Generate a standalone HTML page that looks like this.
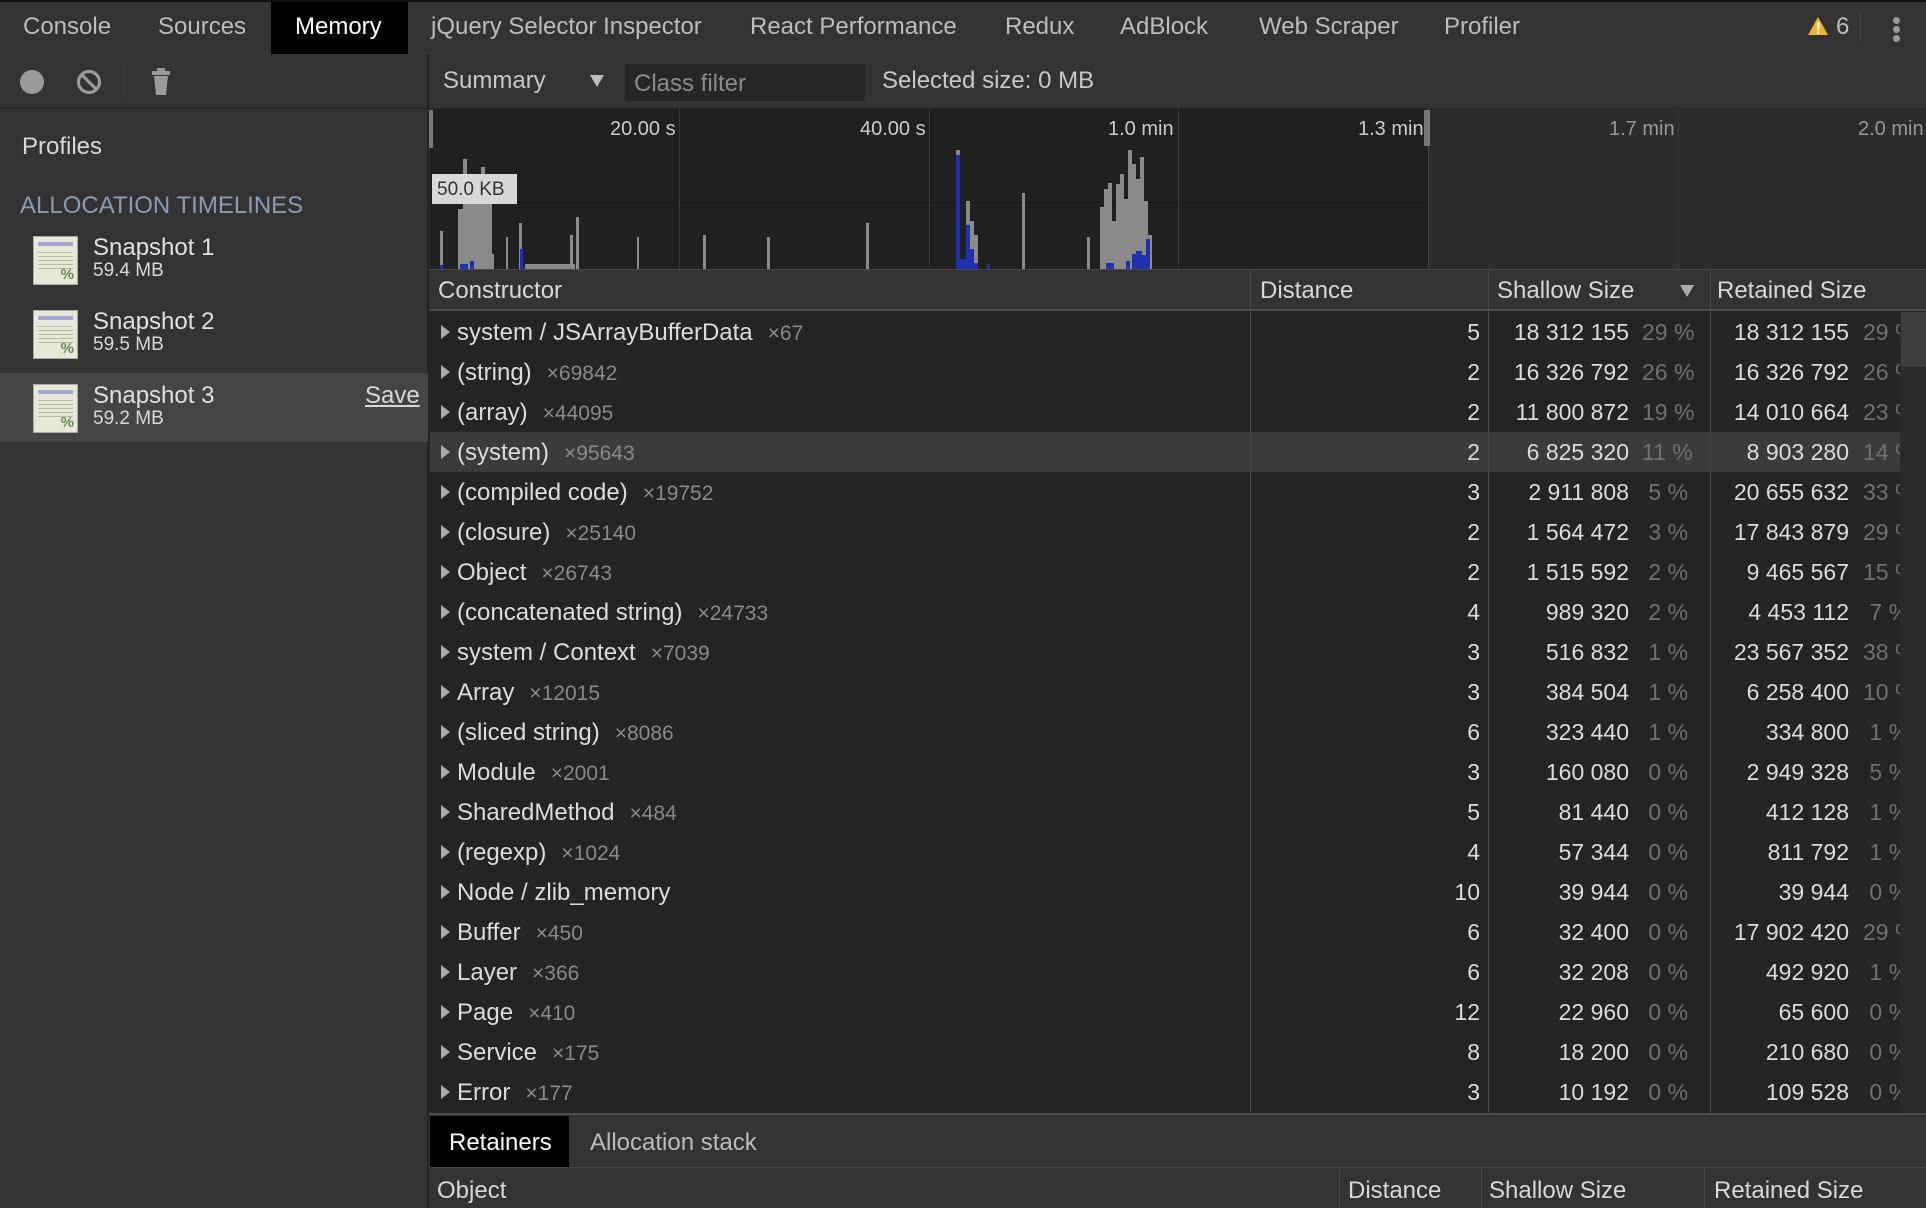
<!DOCTYPE html>
<html><head><meta charset="utf-8"><style>
*{margin:0;padding:0;box-sizing:border-box}
body{width:1926px;height:1208px;background:#242424;font-family:"Liberation Sans",Arial,sans-serif;color:#d0d0d0;position:relative;overflow:hidden}
.a{position:absolute;white-space:nowrap}
.tab{position:absolute;top:0;height:54px;line-height:54px;font-size:24px;color:#bdbdbd;white-space:nowrap}
.row{position:absolute;left:430px;width:1470px;height:40px;font-size:23px;white-space:nowrap;overflow:hidden}
.row .c{position:absolute;left:27px;top:7px;color:#dcdcdc;font-size:24px}
.row .c i{font-style:normal;color:#8a8a8a;font-size:21px;margin-left:15px}
.row .t{position:absolute;left:11px;top:13px;width:0;height:0;border-left:9px solid #aaa;border-top:7px solid transparent;border-bottom:7px solid transparent}
.row .d{position:absolute;right:420px;top:7px;color:#dcdcdc}
.row .s{position:absolute;right:271px;top:7px;color:#dcdcdc}
.row .sp{position:absolute;left:1212px;top:7px;color:#707070}
.row .r{position:absolute;right:51px;top:7px;color:#dcdcdc}
.row .rp{position:absolute;left:1433px;top:7px;color:#707070;width:37px;overflow:hidden}
.vl{position:absolute;width:1px;background:#4a4a4a}
</style></head><body>
<div class="a" style="left:0;top:0;width:1926px;height:54px;background:#333;border-top:2px solid #111;border-bottom:1px solid #3d3d3d"></div>
<div class="tab" style="left:23px">Console</div>
<div class="tab" style="left:158px">Sources</div>
<div class="a" style="left:271px;top:2px;width:137px;height:52px;background:#000"></div>
<div class="tab" style="left:295px;color:#fff">Memory</div>
<div class="tab" style="left:431px">jQuery Selector Inspector</div>
<div class="tab" style="left:750px">React Performance</div>
<div class="tab" style="left:1005px">Redux</div>
<div class="tab" style="left:1120px">AdBlock</div>
<div class="tab" style="left:1259px">Web Scraper</div>
<div class="tab" style="left:1444px">Profiler</div>
<svg class="a" style="left:1807px;top:16px" width="22" height="20"><path d="M11 1 L21 19 L1 19 Z" fill="#f0b429"/><rect x="10" y="6" width="2.4" height="8" fill="#fff"/><rect x="10" y="15.5" width="2.4" height="2.4" fill="#fff"/></svg>
<div class="tab" style="left:1836px">6</div>
<div class="a" style="left:1860px;top:12px;width:1px;height:30px;background:#444"></div>
<div class="a" style="left:1893px;top:17px;width:7px;height:7px;border-radius:50%;background:#999"></div>
<div class="a" style="left:1893px;top:26px;width:7px;height:7px;border-radius:50%;background:#999"></div>
<div class="a" style="left:1893px;top:35px;width:7px;height:7px;border-radius:50%;background:#999"></div>

<div class="a" style="left:0;top:54px;width:428px;height:1154px;background:#333;border-right:1px solid #222"></div>
<div class="a" style="left:0;top:108px;width:428px;height:1px;background:#262626"></div>
<div class="a" style="left:20px;top:70px;width:24px;height:24px;border-radius:50%;background:#9a9a9a"></div>
<svg class="a" style="left:76px;top:69px" width="26" height="26"><circle cx="13" cy="13" r="10.5" fill="none" stroke="#9a9a9a" stroke-width="3.2"/><line x1="6" y1="6" x2="20" y2="20" stroke="#9a9a9a" stroke-width="3.2"/></svg>
<div class="a" style="left:124px;top:66px;width:1px;height:34px;background:#3f3f3f"></div>
<svg class="a" style="left:150px;top:68px" width="22" height="28"><rect x="7" y="0" width="8" height="3" fill="#9a9a9a"/><rect x="2" y="3" width="18" height="4" fill="#9a9a9a"/><path d="M4 8 H18 L16 27 H6 Z" fill="#9a9a9a"/></svg>
<div class="a" style="left:22px;top:133px;font-size:24px;color:#d8d8d8">Profiles</div>
<div class="a" style="left:20px;top:192px;font-size:24px;color:#8c9bb3">ALLOCATION TIMELINES</div>
<div class="a" style="left:0;top:373px;width:428px;height:69px;background:#454545"></div>
<div class="a" style="left:365px;top:382px;font-size:24px;color:#d8d8d8;text-decoration:underline">Save</div>

<div class="a" style="left:429px;top:54px;width:1497px;height:55px;background:#333;border-bottom:1px solid #262626"></div>
<div class="a" style="left:443px;top:67px;font-size:24px;color:#c8c8c8">Summary</div>
<div class="a" style="left:590px;top:75px;width:0;height:0;border-top:12px solid #bbb;border-left:7px solid transparent;border-right:7px solid transparent"></div>
<div class="a" style="left:625px;top:64px;width:240px;height:37px;background:#262626"></div>
<div class="a" style="left:634px;top:70px;font-size:24px;color:#8a8a8a">Class filter</div>
<div class="a" style="left:882px;top:67px;font-size:24px;color:#c8c8c8">Selected size: 0 MB</div>

<div class="a" style="left:429px;top:109px;width:1497px;height:160px;background:#2c2c2c"></div>
<div class="a" style="left:430px;top:109px;width:998px;height:160px;background:#202020"></div>
<div class="a" style="left:430px;top:202px;width:998px;height:1px;background:#151515"></div>
<div class="vl" style="left:679px;top:109px;height:160px;background:#3a3a3a"></div>
<div class="vl" style="left:929px;top:109px;height:160px;background:#3a3a3a"></div>
<div class="vl" style="left:1178px;top:109px;height:160px;background:#3a3a3a"></div>
<div class="vl" style="left:1428px;top:109px;height:160px;background:#444"></div>
<div class="vl" style="left:1678px;top:109px;height:160px;background:#3a3a3a"></div>
<div class="a" style="left:429px;top:110px;width:4px;height:38px;background:#777"></div>
<div class="a" style="left:1424px;top:110px;width:6px;height:36px;background:#777"></div>

<svg class="a" style="left:430px;top:109px" width="1000" height="160">
<g fill="#8a8a8a">
<rect x="10" y="122" width="3" height="38"/>
<rect x="28" y="100" width="6" height="60"/><rect x="33" y="50" width="4" height="110"/><rect x="37" y="85" width="5" height="75"/><rect x="42" y="70" width="4" height="90"/>
<rect x="46" y="90" width="5" height="70"/><rect x="51" y="58" width="4" height="102"/><rect x="55" y="95" width="7" height="65"/><rect x="62" y="145" width="2" height="15"/>
<rect x="76" y="128" width="2" height="32"/><rect x="89" y="114" width="3" height="46"/><rect x="95" y="155" width="50" height="5"/><rect x="140" y="126" width="3" height="34"/><rect x="146" y="108" width="3" height="52"/>
<rect x="207" y="128" width="2" height="32"/><rect x="273" y="126" width="3" height="34"/><rect x="337" y="128" width="3" height="32"/><rect x="436" y="114" width="3" height="46"/>
<rect x="526" y="41" width="4" height="119"/><rect x="536" y="92" width="4" height="68"/><rect x="540" y="112" width="4" height="48"/><rect x="544" y="126" width="4" height="34"/>
<rect x="592" y="84" width="3" height="76"/><rect x="657" y="128" width="3" height="32"/>
<rect x="670" y="98" width="4" height="62"/><rect x="674" y="80" width="4" height="80"/><rect x="678" y="74" width="4" height="86"/><rect x="682" y="112" width="4" height="48"/><rect x="686" y="75" width="4" height="85"/><rect x="690" y="65" width="4" height="95"/><rect x="694" y="90" width="4" height="70"/><rect x="698" y="41" width="4" height="119"/><rect x="702" y="55" width="4" height="105"/><rect x="706" y="70" width="4" height="90"/><rect x="710" y="48" width="4" height="112"/><rect x="714" y="92" width="4" height="68"/><rect x="718" y="126" width="4" height="34"/>
</g>
<g fill="#1f2fb0">
<rect x="10" y="156" width="3" height="4"/><rect x="30" y="155" width="8" height="5"/><rect x="40" y="152" width="4" height="8"/><rect x="90" y="140" width="3" height="20"/>
<rect x="526" y="46" width="4" height="114"/><rect x="530" y="150" width="6" height="10"/><rect x="536" y="116" width="4" height="44"/><rect x="540" y="140" width="4" height="20"/><rect x="544" y="154" width="4" height="6"/><rect x="557" y="155" width="3" height="5"/>
<rect x="676" y="154" width="8" height="6"/><rect x="696" y="152" width="4" height="8"/><rect x="702" y="145" width="4" height="15"/><rect x="706" y="142" width="6" height="18"/><rect x="712" y="146" width="4" height="14"/><rect x="716" y="130" width="4" height="30"/>
</g>
</svg>
<div class="a" style="left:608px;top:118px;font-size:20px;color:#ccc;padding-left:2px">20.00 s</div>
<div class="a" style="left:858px;top:118px;font-size:20px;color:#ccc;padding-left:2px">40.00 s</div>
<div class="a" style="left:1108px;top:118px;font-size:20px;color:#ccc">1.0 min</div>
<div class="a" style="left:1358px;top:118px;font-size:20px;color:#ccc">1.3 min</div>
<div class="a" style="left:1609px;top:118px;font-size:20px;color:#999">1.7 min</div>
<div class="a" style="left:1858px;top:118px;font-size:20px;color:#999">2.0 min</div>
<div class="a" style="left:432px;top:174px;width:85px;height:30px;background:#d8d8d8"></div>
<div class="a" style="left:437px;top:179px;font-size:19px;color:#333">50.0 KB</div>

<div class="a" style="left:429px;top:269px;width:1497px;height:42px;background:#333;border-top:1px solid #4a4a4a;border-bottom:2px solid #4a4a4a"></div>
<div class="a" style="left:438px;top:277px;font-size:24px;color:#d8d8d8">Constructor</div>
<div class="a" style="left:1260px;top:277px;font-size:24px;color:#d8d8d8">Distance</div>
<div class="a" style="left:1497px;top:277px;font-size:24px;color:#d8d8d8">Shallow Size</div>
<div class="a" style="left:1680px;top:285px;width:0;height:0;border-top:12px solid #aaa;border-left:7px solid transparent;border-right:7px solid transparent"></div>
<div class="a" style="left:1717px;top:277px;font-size:24px;color:#d8d8d8">Retained Size</div>

<div class="a" style="left:1900px;top:312px;width:26px;height:801px;background:#2a2a2a"></div>
<div class="a" style="left:1901px;top:312px;width:25px;height:55px;background:#3e3e3e"></div>

<div class="a" style="left:429px;top:1113px;width:1497px;height:95px;background:#333;border-top:2px solid #4a4a4a"></div>
<div class="a" style="left:430px;top:1116px;width:139px;height:51px;background:#000"></div>
<div class="a" style="left:449px;top:1129px;font-size:24px;color:#fff">Retainers</div>
<div class="a" style="left:590px;top:1129px;font-size:24px;color:#bdbdbd">Allocation stack</div>
<div class="a" style="left:429px;top:1167px;width:1497px;height:1px;background:#444"></div>
<div class="vl" style="left:1339px;top:1169px;height:39px"></div>
<div class="vl" style="left:1481px;top:1169px;height:39px"></div>
<div class="vl" style="left:1704px;top:1169px;height:39px"></div>
<div class="a" style="left:437px;top:1177px;font-size:24px;color:#d8d8d8">Object</div>
<div class="a" style="left:1348px;top:1177px;font-size:24px;color:#d8d8d8">Distance</div>
<div class="a" style="left:1489px;top:1177px;font-size:24px;color:#d8d8d8">Shallow Size</div>
<div class="a" style="left:1714px;top:1177px;font-size:24px;color:#d8d8d8">Retained Size</div>

<div class="a" style="left:33px;top:236px;width:45px;height:49px;background:#e8e8d8;border:1px solid #aaa"><div style="margin:5px 4px 0;height:4px;background:#a8a8d8"></div><div style="margin:3px 4px;height:22px;background:repeating-linear-gradient(#e8e8d8 0 3px,#b8b8a8 3px 4px)"></div><div style="position:absolute;right:3px;bottom:1px;font-size:15px;color:#6a8a5a;font-weight:bold">%</div></div>
<div class="a" style="left:93px;top:234px;font-size:24px;color:#e0e0e0">Snapshot 1</div>
<div class="a" style="left:93px;top:260px;font-size:19px;color:#d8d8d8">59.4 MB</div>
<div class="a" style="left:33px;top:310px;width:45px;height:49px;background:#e8e8d8;border:1px solid #aaa"><div style="margin:5px 4px 0;height:4px;background:#a8a8d8"></div><div style="margin:3px 4px;height:22px;background:repeating-linear-gradient(#e8e8d8 0 3px,#b8b8a8 3px 4px)"></div><div style="position:absolute;right:3px;bottom:1px;font-size:15px;color:#6a8a5a;font-weight:bold">%</div></div>
<div class="a" style="left:93px;top:308px;font-size:24px;color:#e0e0e0">Snapshot 2</div>
<div class="a" style="left:93px;top:334px;font-size:19px;color:#d8d8d8">59.5 MB</div>
<div class="a" style="left:33px;top:384px;width:45px;height:49px;background:#e8e8d8;border:1px solid #aaa"><div style="margin:5px 4px 0;height:4px;background:#a8a8d8"></div><div style="margin:3px 4px;height:22px;background:repeating-linear-gradient(#e8e8d8 0 3px,#b8b8a8 3px 4px)"></div><div style="position:absolute;right:3px;bottom:1px;font-size:15px;color:#6a8a5a;font-weight:bold">%</div></div>
<div class="a" style="left:93px;top:382px;font-size:24px;color:#e0e0e0">Snapshot 3</div>
<div class="a" style="left:93px;top:408px;font-size:19px;color:#d8d8d8">59.2 MB</div>

<div class="row" style="top:312px"><div class="t"></div><div class="c">system / JSArrayBufferData<i>×67</i></div><div class="d">5</div><div class="s">18 312 155</div><div class="sp">29 %</div><div class="r">18 312 155</div><div class="rp">29 %</div></div>
<div class="row" style="top:352px"><div class="t"></div><div class="c">(string)<i>×69842</i></div><div class="d">2</div><div class="s">16 326 792</div><div class="sp">26 %</div><div class="r">16 326 792</div><div class="rp">26 %</div></div>
<div class="row" style="top:392px"><div class="t"></div><div class="c">(array)<i>×44095</i></div><div class="d">2</div><div class="s">11 800 872</div><div class="sp">19 %</div><div class="r">14 010 664</div><div class="rp">23 %</div></div>
<div class="row" style="top:432px;background:#3b3b3b"><div class="t"></div><div class="c">(system)<i>×95643</i></div><div class="d">2</div><div class="s">6 825 320</div><div class="sp">11 %</div><div class="r">8 903 280</div><div class="rp">14 %</div></div>
<div class="row" style="top:472px"><div class="t"></div><div class="c">(compiled code)<i>×19752</i></div><div class="d">3</div><div class="s">2 911 808</div><div class="sp">&nbsp;5 %</div><div class="r">20 655 632</div><div class="rp">33 %</div></div>
<div class="row" style="top:512px"><div class="t"></div><div class="c">(closure)<i>×25140</i></div><div class="d">2</div><div class="s">1 564 472</div><div class="sp">&nbsp;3 %</div><div class="r">17 843 879</div><div class="rp">29 %</div></div>
<div class="row" style="top:552px"><div class="t"></div><div class="c">Object<i>×26743</i></div><div class="d">2</div><div class="s">1 515 592</div><div class="sp">&nbsp;2 %</div><div class="r">9 465 567</div><div class="rp">15 %</div></div>
<div class="row" style="top:592px"><div class="t"></div><div class="c">(concatenated string)<i>×24733</i></div><div class="d">4</div><div class="s">989 320</div><div class="sp">&nbsp;2 %</div><div class="r">4 453 112</div><div class="rp">&nbsp;7 %</div></div>
<div class="row" style="top:632px"><div class="t"></div><div class="c">system / Context<i>×7039</i></div><div class="d">3</div><div class="s">516 832</div><div class="sp">&nbsp;1 %</div><div class="r">23 567 352</div><div class="rp">38 %</div></div>
<div class="row" style="top:672px"><div class="t"></div><div class="c">Array<i>×12015</i></div><div class="d">3</div><div class="s">384 504</div><div class="sp">&nbsp;1 %</div><div class="r">6 258 400</div><div class="rp">10 %</div></div>
<div class="row" style="top:712px"><div class="t"></div><div class="c">(sliced string)<i>×8086</i></div><div class="d">6</div><div class="s">323 440</div><div class="sp">&nbsp;1 %</div><div class="r">334 800</div><div class="rp">&nbsp;1 %</div></div>
<div class="row" style="top:752px"><div class="t"></div><div class="c">Module<i>×2001</i></div><div class="d">3</div><div class="s">160 080</div><div class="sp">&nbsp;0 %</div><div class="r">2 949 328</div><div class="rp">&nbsp;5 %</div></div>
<div class="row" style="top:792px"><div class="t"></div><div class="c">SharedMethod<i>×484</i></div><div class="d">5</div><div class="s">81 440</div><div class="sp">&nbsp;0 %</div><div class="r">412 128</div><div class="rp">&nbsp;1 %</div></div>
<div class="row" style="top:832px"><div class="t"></div><div class="c">(regexp)<i>×1024</i></div><div class="d">4</div><div class="s">57 344</div><div class="sp">&nbsp;0 %</div><div class="r">811 792</div><div class="rp">&nbsp;1 %</div></div>
<div class="row" style="top:872px"><div class="t"></div><div class="c">Node / zlib_memory</div><div class="d">10</div><div class="s">39 944</div><div class="sp">&nbsp;0 %</div><div class="r">39 944</div><div class="rp">&nbsp;0 %</div></div>
<div class="row" style="top:912px"><div class="t"></div><div class="c">Buffer<i>×450</i></div><div class="d">6</div><div class="s">32 400</div><div class="sp">&nbsp;0 %</div><div class="r">17 902 420</div><div class="rp">29 %</div></div>
<div class="row" style="top:952px"><div class="t"></div><div class="c">Layer<i>×366</i></div><div class="d">6</div><div class="s">32 208</div><div class="sp">&nbsp;0 %</div><div class="r">492 920</div><div class="rp">&nbsp;1 %</div></div>
<div class="row" style="top:992px"><div class="t"></div><div class="c">Page<i>×410</i></div><div class="d">12</div><div class="s">22 960</div><div class="sp">&nbsp;0 %</div><div class="r">65 600</div><div class="rp">&nbsp;0 %</div></div>
<div class="row" style="top:1032px"><div class="t"></div><div class="c">Service<i>×175</i></div><div class="d">8</div><div class="s">18 200</div><div class="sp">&nbsp;0 %</div><div class="r">210 680</div><div class="rp">&nbsp;0 %</div></div>
<div class="row" style="top:1072px"><div class="t"></div><div class="c">Error<i>×177</i></div><div class="d">3</div><div class="s">10 192</div><div class="sp">&nbsp;0 %</div><div class="r">109 528</div><div class="rp">&nbsp;0 %</div></div>

<div class="vl" style="left:1250px;top:270px;height:843px"></div>
<div class="vl" style="left:1488px;top:270px;height:843px"></div>
<div class="vl" style="left:1710px;top:270px;height:843px"></div>
</body></html>
